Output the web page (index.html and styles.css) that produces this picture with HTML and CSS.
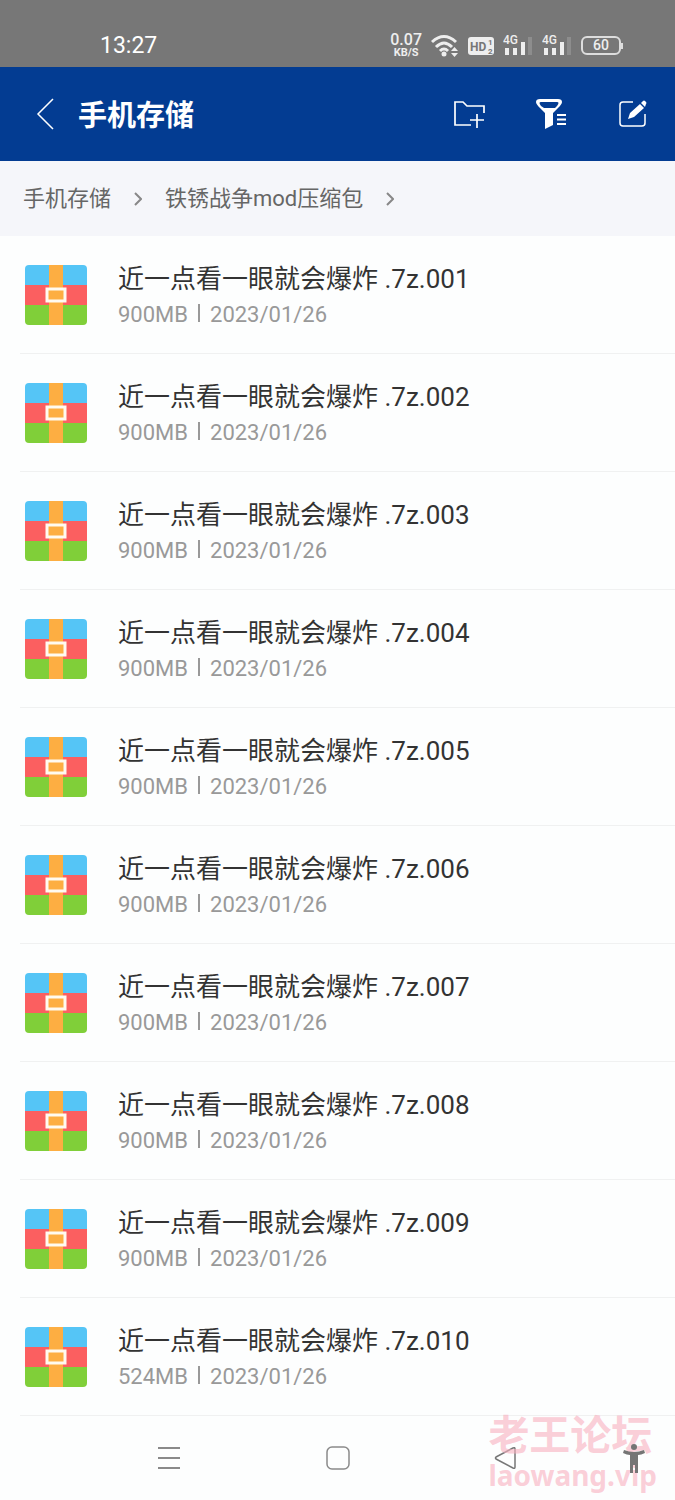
FILE: index.html
```html
<!DOCTYPE html>
<html lang="zh-CN">

<head>
    <meta charset="UTF-8">
    <meta name="viewport" content="width=device-width, initial-scale=1.0">
    <title>手机存储</title>
    <link rel="stylesheet" href="styles.css">
</head>

<body>
    <!-- 文件图标 -->
    <svg class="defs" width="0" height="0" aria-hidden="true">
        <symbol id="icon-zip" viewBox="0 0 62 60">
            <clipPath id="zip-clip"><rect width="62" height="60" rx="4" /></clipPath>
            <g clip-path="url(#zip-clip)">
                <rect width="62" height="21" fill="#55c5f6" />
                <rect y="20" width="62" height="20" fill="#fb5f60" />
                <rect y="40" width="62" height="20" fill="#80cf39" />
                <rect x="24" width="14" height="60" fill="#fdae42" />
            </g>
            <rect x="22" y="24" width="18" height="12" fill="#fdae42" stroke="#fffaf0" stroke-width="3" />
        </symbol>
    </svg>

    <div class="app">
        <!-- 状态栏 -->
        <div class="status-bar">
            <time class="status-time">13:27</time>
            <div class="status-icons">
                <div class="net-speed"><span>0.07</span><small>KB/S</small></div>
                <svg class="wifi" viewBox="0 0 28 24" width="28" height="24">
                    <g fill="none" stroke="#eee" stroke-width="3">
                        <path d="M1 8Q13-3 25 8" />
                        <path d="M5 13Q13 5 21 13" />
                        <path d="M9 17Q13 13 17 17" />
                    </g>
                    <circle cx="13" cy="20" r="2.500" fill="#eee" />
                    <path d="M20 17l3.500-4 3.500 4zM20 19l3.500 4 3.500-4z" fill="#eee" />
                </svg>
                <svg class="hd" viewBox="0 0 26 18" width="26" height="18">
                    <rect width="26" height="18" rx="3" fill="#eee" />
                    <text x="2" y="14" font-size="12" font-weight="700" fill="#777">HD</text>
                    <text x="20" y="8" font-size="8" font-weight="700" fill="#777">1</text>
                    <text x="20" y="17" font-size="8" font-weight="700" fill="#777">2</text>
                </svg>
                <svg class="signal" viewBox="0 0 30 24" width="30" height="24">
                    <text x="0" y="10" font-size="12" font-weight="500" fill="#eee">4G</text>
                    <path d="M2 14h4v7H2zM10 14h4v7h-4zM18 8h4v13h-4z" fill="#eee" />
                    <path d="M25 3h4v18h-4z" fill="#8d8d8d" />
                </svg>
                <svg class="signal" viewBox="0 0 30 24" width="30" height="24">
                    <text x="0" y="10" font-size="12" font-weight="500" fill="#eee">4G</text>
                    <path d="M2 14h4v7H2zM10 14h4v7h-4zM18 8h4v13h-4z" fill="#eee" />
                    <path d="M25 3h4v18h-4z" fill="#8d8d8d" />
                </svg>
                <div class="battery">60</div>
            </div>
        </div>

        <!-- 标题栏 -->
        <header class="title-bar">
            <button class="icon-btn back" aria-label="返回">
                <svg viewBox="0 0 18 32" width="18" height="32" fill="none" stroke="#fff" stroke-width="1.500">
                    <path d="M17 1L2 16l15 15" />
                </svg>
            </button>
            <h1>手机存储</h1>
            <div class="title-actions">
                <button class="icon-btn" aria-label="新建文件夹">
                    <svg viewBox="0 0 32 32" width="32" height="32" fill="none" stroke="#fff" stroke-width="1.700">
                        <path d="M18 27H2V4h8l4 4h17v7M24 16v14M17 22h14" />
                    </svg>
                </button>
                <button class="icon-btn" aria-label="筛选">
                    <svg viewBox="0 0 32 32" width="32" height="32">
                        <path d="M5 1h18q4 0 4 3 0 2-4 6l-5 5v12l-8 4V15L5 10Q1 6 1 4q0-3 4-3z" fill="#fff" />
                        <path d="M6 4h16q3 0 0 4l-2 2H9L6 8Q3 4 6 4z" fill="#033c92" />
                        <path d="M22 17h9M22 21.500h9M22 26h9" stroke="#fff" stroke-width="2" />
                    </svg>
                </button>
                <button class="icon-btn" aria-label="编辑">
                    <svg viewBox="0 0 32 32" width="32" height="32">
                        <path d="M16 4H6Q3 4 3 7v18q0 3 3 3h19q3 0 3-3v-9" fill="none" stroke="#fff" stroke-width="1.500" />
                        <path d="M11 21l2-6 10-9 4 4-10 9zM24 5l2-2q1-1 2 0l1 1q1 1 0 2l-1 3z" fill="#fff" />
                    </svg>
                </button>
            </div>
        </header>

        <!-- 路径 -->
        <nav class="breadcrumb" aria-label="路径">
            <a href="#">手机存储</a>
            <svg viewBox="0 0 8 14" width="8" height="14"><path d="M1 1l6 6-6 6" /></svg>
            <a href="#">铁锈战争mod压缩包</a>
            <svg viewBox="0 0 8 14" width="8" height="14"><path d="M1 1l6 6-6 6" /></svg>
        </nav>

        <!-- 文件列表 -->
        <ul class="file-list">
            <li class="file-item">
                <svg class="file-icon"><use href="#icon-zip" /></svg>
                <div class="file-info">
                    <div class="file-name">近一点看一眼就会爆炸 .7z.001</div>
                    <div class="file-meta"><span>900MB</span><span>2023/01/26</span></div>
                </div>
            </li>
            <li class="file-item">
                <svg class="file-icon"><use href="#icon-zip" /></svg>
                <div class="file-info">
                    <div class="file-name">近一点看一眼就会爆炸 .7z.002</div>
                    <div class="file-meta"><span>900MB</span><span>2023/01/26</span></div>
                </div>
            </li>
            <li class="file-item">
                <svg class="file-icon"><use href="#icon-zip" /></svg>
                <div class="file-info">
                    <div class="file-name">近一点看一眼就会爆炸 .7z.003</div>
                    <div class="file-meta"><span>900MB</span><span>2023/01/26</span></div>
                </div>
            </li>
            <li class="file-item">
                <svg class="file-icon"><use href="#icon-zip" /></svg>
                <div class="file-info">
                    <div class="file-name">近一点看一眼就会爆炸 .7z.004</div>
                    <div class="file-meta"><span>900MB</span><span>2023/01/26</span></div>
                </div>
            </li>
            <li class="file-item">
                <svg class="file-icon"><use href="#icon-zip" /></svg>
                <div class="file-info">
                    <div class="file-name">近一点看一眼就会爆炸 .7z.005</div>
                    <div class="file-meta"><span>900MB</span><span>2023/01/26</span></div>
                </div>
            </li>
            <li class="file-item">
                <svg class="file-icon"><use href="#icon-zip" /></svg>
                <div class="file-info">
                    <div class="file-name">近一点看一眼就会爆炸 .7z.006</div>
                    <div class="file-meta"><span>900MB</span><span>2023/01/26</span></div>
                </div>
            </li>
            <li class="file-item">
                <svg class="file-icon"><use href="#icon-zip" /></svg>
                <div class="file-info">
                    <div class="file-name">近一点看一眼就会爆炸 .7z.007</div>
                    <div class="file-meta"><span>900MB</span><span>2023/01/26</span></div>
                </div>
            </li>
            <li class="file-item">
                <svg class="file-icon"><use href="#icon-zip" /></svg>
                <div class="file-info">
                    <div class="file-name">近一点看一眼就会爆炸 .7z.008</div>
                    <div class="file-meta"><span>900MB</span><span>2023/01/26</span></div>
                </div>
            </li>
            <li class="file-item">
                <svg class="file-icon"><use href="#icon-zip" /></svg>
                <div class="file-info">
                    <div class="file-name">近一点看一眼就会爆炸 .7z.009</div>
                    <div class="file-meta"><span>900MB</span><span>2023/01/26</span></div>
                </div>
            </li>
            <li class="file-item">
                <svg class="file-icon"><use href="#icon-zip" /></svg>
                <div class="file-info">
                    <div class="file-name">近一点看一眼就会爆炸 .7z.010</div>
                    <div class="file-meta"><span>524MB</span><span>2023/01/26</span></div>
                </div>
            </li>
        </ul>

        <!-- 底部导航 -->
        <div class="bottom-nav">
            <button class="icon-btn" aria-label="最近任务">
                <svg viewBox="0 0 24 24" width="24" height="24" stroke="#8a8a8a" stroke-width="2">
                    <path d="M1 2h22M1 12h22M1 22h22" />
                </svg>
            </button>
            <button class="icon-btn" aria-label="主屏幕">
                <svg viewBox="0 0 24 24" width="24" height="24" fill="none" stroke="#8a8a8a" stroke-width="1.500">
                    <rect x="1" y="1" width="22" height="22" rx="5" />
                </svg>
            </button>
            <button class="icon-btn" aria-label="返回上一页">
                <svg viewBox="0 0 24 24" width="24" height="24" fill="none" stroke="#777" stroke-width="1.500" stroke-linejoin="round">
                    <path d="M21 3v18q0 2-2 1L2 13q-1-1 0-2L19 2q2-1 2 1z" />
                </svg>
            </button>
            <button class="icon-btn access" aria-label="无障碍">
                <svg viewBox="0 0 24 32" width="24" height="32" fill="#757575">
                    <circle cx="12" cy="4" r="3" />
                    <path d="M2 7q10 4 20 0l1 3q-4 2-7 2v18h-3v-8h-2v8H8V12q-3 0-7-2z" />
                </svg>
            </button>
            <div class="watermark">
                <div class="watermark-name">老王论坛</div>
                <div class="watermark-site">laowang.vip</div>
            </div>
        </div>
    </div>
</body>

</html>
```
FILE: styles.css
```css
:root {
    --blue: #033c92;
    --status-gray: #777777;
    --path-bg: #f5f6fa;
    --text: #333333;
    --text-light: #999999;
    --line: #f0f1f1;
}

* {
    margin: 0;
    padding: 0;
    box-sizing: border-box;
}

body {
    background-color: #fdfefe;
    color: var(--text);
    font-family: Roboto, "Noto Sans CJK SC", sans-serif;
}

.defs {
    position: absolute;
}

.app {
    min-height: 100vh;
    display: flex;
    flex-direction: column;
}

.icon-btn {
    display: flex;
    background: none;
    border: none;
    cursor: pointer;
}

/* 状态栏 */
.status-bar {
    display: flex;
    justify-content: space-between;
    align-items: center;
    padding: 24px 54px 0 100px;
    height: 67px;
    background: var(--status-gray);
    color: #fff;
}

.status-time {
    font-size: 23px;
}

.status-icons {
    display: flex;
    align-items: center;
    gap: 9px;
    color: #eee;
}

.net-speed {
    display: flex;
    flex-direction: column;
    align-items: center;
    font-size: 16px;
    line-height: 14px;
    font-weight: 500;
}

.net-speed small {
    font-size: 11px;
    line-height: 12px;
    font-weight: 700;
}

.battery {
    position: relative;
    width: 40px;
    height: 19px;
    border: 2px solid #ddd;
    border-radius: 6px;
    font-size: 14px;
    line-height: 15px;
    font-weight: 500;
    text-align: center;
}

.battery::after {
    content: "";
    position: absolute;
    top: 5px;
    right: -4px;
    width: 2px;
    height: 6px;
    background: #ddd;
}

/* 标题栏 */
.title-bar {
    display: flex;
    align-items: center;
    padding: 0 26px 0 36px;
    height: 94px;
    background: var(--blue);
    color: #fff;
}

.title-bar h1 {
    margin-left: 24px;
    padding-top: 3px;
    font-size: 29px;
    line-height: 40px;
    font-weight: 700;
}

.title-actions {
    display: flex;
    gap: 50px;
    margin-left: auto;
}

/* 路径 */
.breadcrumb {
    display: flex;
    align-items: center;
    gap: 23px;
    padding: 22px 23px;
    background: var(--path-bg);
}

.breadcrumb a {
    color: #666;
    font-size: 22px;
    line-height: 31px;
    text-decoration: none;
}

.breadcrumb svg {
    fill: none;
    stroke: #888;
    stroke-width: 2;
}

/* 文件列表 */
.file-list {
    list-style: none;
    padding-left: 20px;
}

.file-item {
    display: flex;
    align-items: center;
    gap: 31px;
    height: 118px;
    padding-left: 5px;
    border-bottom: 1px solid var(--line);
}

.file-icon {
    width: 62px;
    height: 60px;
}

.file-name {
    font-size: 26px;
    line-height: 40px;
}

.file-meta {
    display: flex;
    align-items: center;
    color: var(--text-light);
    font-size: 22px;
    line-height: 32px;
}

.file-meta span + span::before {
    content: "";
    display: inline-block;
    width: 2px;
    height: 18px;
    margin: 0 10px;
    background: var(--text-light);
}

/* 底部导航 */
.bottom-nav {
    position: relative;
    flex: 1;
    display: grid;
    grid-template-columns: repeat(3, 1fr);
    place-items: center;
    min-height: 84px;
    padding: 0 12.5%;
}

.access {
    position: absolute;
    right: 29px;
    bottom: 25px;
    z-index: 1;
}

/* 水印 */
.watermark {
    position: absolute;
    right: 18px;
    bottom: 6px;
    color: rgba(248, 175, 190, 0.6);
    font-weight: 700;
    pointer-events: none;
}

.watermark-name {
    font-family: "Noto Sans CJK SC", sans-serif;
    font-size: 41px;
    line-height: 48px;
}

.watermark-site {
    font-family: "Noto Sans", sans-serif;
    font-size: 28px;
    line-height: 38px;
}
```
